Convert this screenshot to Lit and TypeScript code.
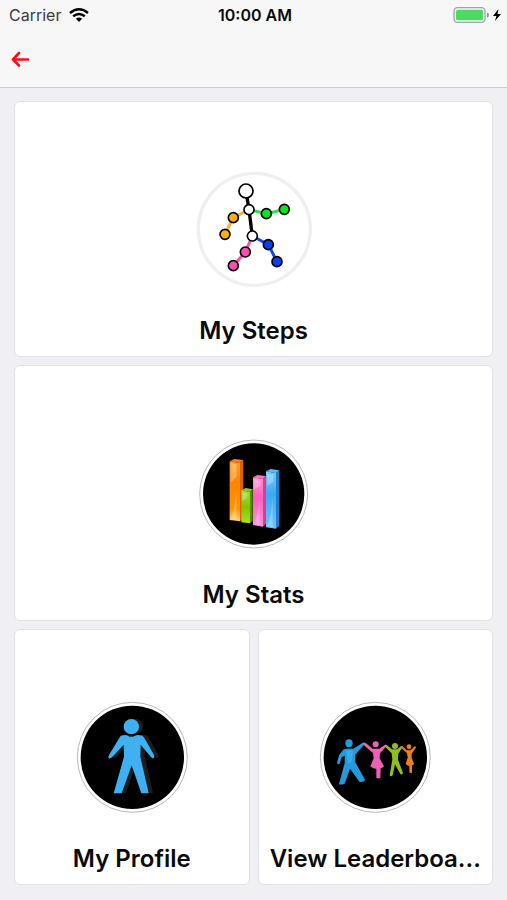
import { LitElement, html, svg, css, type TemplateResult } from "lit";
import { customElement, property } from "lit/decorators.js";

type Joint = [x: number, y: number, r: number, fill: string];

const joints: Joint[] = [
  [168, 77, 21, "#fff"],
  [177, 133, 15, "#fff"],
  [187, 212, 15, "#fff"],
  [130, 157, 15, "#fbb00f"],
  [105, 207, 15, "#fbb00f"],
  [229, 145, 15, "#0ae51e"],
  [283, 132, 15, "#0ae51e"],
  [166, 260, 15, "#fb4fae"],
  [130, 301, 15, "#fb4fae"],
  [235, 238, 15, "#0b40f0"],
  [261, 289, 15, "#0b40f0"],
];

const stepsIcon = html`
  <svg viewBox="-3 -1 390 390" aria-hidden="true">
    <circle cx="193" cy="192" r="168" fill="#fff" stroke="#efefef" stroke-width="10" />
    <g fill="none" stroke-width="9">
      <path d="M177 133L130 157L105 207" stroke="#fbb03c" />
      <path d="M177 133L229 145L283 132" stroke="#2fe04a" />
      <path d="M187 212L166 260L130 301" stroke="#fb4f9e" />
      <path d="M187 212L235 238L261 289" stroke="#1648f5" />
      <path d="M168 77L177 133L187 212" stroke="#000" stroke-width="10" />
    </g>
    ${joints.map(
      ([x, y, r, fill]) =>
        svg`<circle cx=${x} cy=${y} r=${r} fill=${fill} stroke="#000" stroke-width="5" />`
    )}
  </svg>
`;

const statsIcon = html`
  <svg viewBox="-3 -3 390 390" aria-hidden="true">
    <defs>
      <linearGradient id="o" x1="0" y1="0" x2="0" y2="1">
        <stop offset="0" stop-color="#ff9d2e" /><stop offset=".35" stop-color="#fb8500" />
        <stop offset=".8" stop-color="#ff9408" /><stop offset="1" stop-color="#ffd27a" />
      </linearGradient>
      <linearGradient id="g" x1="0" y1="0" x2="0" y2="1">
        <stop offset="0" stop-color="#a6dc3c" /><stop offset=".5" stop-color="#84c400" />
        <stop offset="1" stop-color="#a4e12a" />
      </linearGradient>
      <linearGradient id="p" x1="0" y1="0" x2="0" y2="1">
        <stop offset="0" stop-color="#ff93d4" /><stop offset=".4" stop-color="#fa5fbd" />
        <stop offset="1" stop-color="#ff8fd8" />
      </linearGradient>
      <linearGradient id="b" x1="0" y1="0" x2="0" y2="1">
        <stop offset="0" stop-color="#7dccff" /><stop offset=".4" stop-color="#39a9f5" />
        <stop offset="1" stop-color="#6cc6ff" />
      </linearGradient>
    </defs>
    <circle cx="191" cy="192" r="162" fill="#fff" stroke="#b9b9b9" stroke-width="3" />
    <circle cx="191" cy="192" r="152" />
    <path d="M119 94L133 87L160 90L150 99Z" fill="#ff7a1c" />
    <path d="M150 98L160 90V266L150 274Z" fill="#dc6400" />
    <path d="M119 94L150 99V274L119 270Z" fill="url(#o)" />
    <path d="M154 181L167 174L188 178L180 186Z" fill="#8fc92c" />
    <path d="M180 186L188 178V272L180 280Z" fill="#568c00" />
    <path d="M154 181L180 186V280L154 277Z" fill="url(#g)" />
    <path d="M189 142L202 135L228 138L219 147Z" fill="#ff6fc4" />
    <path d="M219 147L228 138V281L219 290Z" fill="#d83c97" />
    <path d="M189 142L219 147V290L189 285Z" fill="url(#p)" />
    <path d="M228 124L242 117L268 121L258 130Z" fill="#55b8fb" />
    <path d="M258 130L268 121V287L258 296Z" fill="#1d7fc8" />
    <path d="M228 124L258 130V296L228 292Z" fill="url(#b)" />
    <g fill="#fff" opacity=".28">
      <path d="M122 100L140 103V140L122 158Z" />
      <path d="M157 188L172 190V204L157 212Z" />
      <path d="M192 149L211 152V168L192 180Z" />
      <path d="M232 132L250 135V155L232 168Z" />
      <path d="M134 225L139 190V270L123 268Z" />
      <path d="M203 250L209 205V286L193 283Z" />
      <path d="M243 250L248 205V292L232 289Z" />
    </g>
  </svg>
`;

const person =
  "M153 122Q169 118 174 122Q185 129 196 122Q202 118 218 122Q223 125 228 136L253 180Q256 187 251 190Q247 191 242 184L213 149L212 185L237 295H215L186 211L156 295H132L163 185L162 149L130 184Q124 191 118 190Q115 188 118 180Z";

const profileIcon = html`
  <svg viewBox="-8 -6 390 390" aria-hidden="true">
    <circle cx="188" cy="187" r="165" fill="#fff" stroke="#b9b9b9" stroke-width="3" />
    <circle cx="188" cy="187" r="155" />
    <g fill="#1d1d1d" transform="translate(13 -1)">
      <circle cx="185" cy="95" r="22" />
      <path d=${person} />
    </g>
    <g fill="#3fb1f3">
      <circle cx="185" cy="95" r="23" />
      <path d=${person} />
    </g>
  </svg>
`;

const leaderboardIcon = html`
  <svg viewBox="0 -6 390 390" aria-hidden="true">
    <circle cx="196" cy="187" r="165" fill="#fff" stroke="#b9b9b9" stroke-width="3" />
    <circle cx="196" cy="187" r="155" />
    <g fill="#2499dc">
      <ellipse cx="117" cy="145" rx="11" ry="12" />
      <path d="M101 163Q117 159 130 161L158 143Q164 143 162 149L136 179V202L165 254Q164 261 149 261L120 221L104 266Q92 271 87 267L104 205V182L95 187L89 206Q82 210 81 203L87 181Z" />
    </g>
    <path d="M108 168Q121 164 129 168L125 200L115 208Z" fill="#54baf2" opacity=".5" />
    <g fill="#ee5fb5">
      <circle cx="197" cy="148" r="9" />
      <path d="M159 143Q163 141 168 145L188 161H208L225 149Q230 149 228 155L210 175L209 190L222 214Q218 220 212 219L211 249Q205 252 199 248V221Q189 222 181 214L191 190L189 174L160 149Z" />
    </g>
    <g fill="#8fbd22">
      <circle cx="255" cy="153" r="9" />
      <path d="M225 150Q229 147 233 152L246 163H262L273 153Q278 153 276 159L265 176L264 194L279 234Q277 241 271 237L255 208L248 241Q241 247 239 240L247 194L245 175L226 156Z" />
    </g>
    <g fill="#ed7e22">
      <circle cx="297" cy="155" r="7" />
      <path d="M273 154Q277 152 280 156L291 166H302L314 154Q319 153 317 159L305 176V188L312 206Q311 211 306 211V233Q302 236 298 232V212Q292 213 287 207L293 188L291 175L274 159Z" />
    </g>
  </svg>
`;

@customElement("menu-card")
export class MenuCard extends LitElement {
  @property() label = "";
  @property({ attribute: false }) icon?: TemplateResult;

  static styles = css`
    :host {
      display: block;
      min-width: 0;
    }
    .card {
      box-sizing: border-box;
      display: flex;
      flex-direction: column;
      align-items: center;
      gap: 20px;
      width: 100%;
      padding: 63px 8px 9px;
      border: 1px solid #e2e2e6;
      border-radius: 6px;
      background: #fff;
      color: #0a0a0a;
      font: 600 24px/32px Inter, "Liberation Sans", sans-serif;
      cursor: pointer;
    }
    .label {
      max-width: 100%;
      overflow: hidden;
      text-overflow: ellipsis;
      white-space: nowrap;
    }
    svg {
      display: block;
      width: 130px;
      height: 130px;
    }
  `;

  render() {
    return html`
      <button class="card" type="button">
        ${this.icon}
        <span class="label">${this.label}</span>
      </button>
    `;
  }
}

@customElement("app-root")
export class AppRoot extends LitElement {
  static styles = css`
    :host {
      display: flex;
      flex-direction: column;
      min-height: 100vh;
      background: #efeff4;
      color: #0a0a0a;
      font-family: Inter, "Liberation Sans", sans-serif;
    }
    header {
      background: #f7f7f8;
      border-bottom: 1px solid #cdcdd1;
    }
    .status {
      display: grid;
      grid-template-columns: 1fr auto 1fr;
      align-items: center;
      height: 30px;
      padding: 0 6px 0 9px;
      font-size: 16px;
      line-height: 20px;
    }
    .carrier,
    .power {
      display: flex;
      align-items: center;
      gap: 8px;
      color: #3c3c3e;
    }
    .power {
      justify-content: flex-end;
      gap: 4px;
    }
    .time {
      font-weight: 600;
    }
    .nav {
      display: flex;
      align-items: center;
      height: 57px;
      padding: 0 10px;
    }
    .back {
      display: flex;
      padding: 0;
      border: 0;
      background: none;
      cursor: pointer;
    }
    svg {
      display: block;
    }
    .cards {
      display: grid;
      grid-template-columns: repeat(2, minmax(0, 1fr));
      gap: 8px;
      padding: 13px 14px;
    }
    .wide {
      grid-column: 1 / -1;
    }
  `;

  render() {
    return html`
      <header>
        <div class="status">
          <div class="carrier">
            <span>Carrier</span>
            <svg width="20" height="14" viewBox="0 0 20 14" fill="none" stroke="#000" stroke-width="2.5" aria-hidden="true">
              <path d="M1 4.9Q10 -2.3 19 4.9" />
              <path d="M4.2 8.3Q10 3.6 15.8 8.3" />
              <path d="M10 14L6.9 10.8Q10 8.4 13.1 10.8Z" fill="#000" stroke="none" />
            </svg>
          </div>
          <span class="time">10:00 AM</span>
          <div class="power">
            <svg width="36" height="16" viewBox="0 0 36 16" aria-hidden="true">
              <rect x="1" y="0.7" width="31" height="14.6" rx="3.5" fill="#f7f7f8" stroke="#a3a3a3" stroke-width="1.3" />
              <rect x="3" y="2.8" width="27" height="10.4" rx="1.5" fill="#4cd964" />
              <path d="M34 5.5Q36 6 36 8T34 10.5Z" fill="#8e8e8e" />
            </svg>
            <svg width="8" height="12" viewBox="0 0 8 12" aria-hidden="true">
              <path d="M5.5 0L0 7H3.4L2 12L8 5H4.5Z" />
            </svg>
          </div>
        </div>
        <nav class="nav">
          <button class="back" type="button" aria-label="Back">
            <svg width="20" height="16" viewBox="0 0 20 16" fill="none" stroke="#fb1018" stroke-width="2.6" stroke-linecap="round" stroke-linejoin="round" aria-hidden="true">
              <path d="M9 2L3 8.5L9 14.5M3 8.5H18" />
            </svg>
          </button>
        </nav>
      </header>
      <main class="cards">
        <menu-card class="wide" label="My Steps" .icon=${stepsIcon}></menu-card>
        <menu-card class="wide" label="My Stats" .icon=${statsIcon}></menu-card>
        <menu-card label="My Profile" .icon=${profileIcon}></menu-card>
        <menu-card label="View Leaderboa..." .icon=${leaderboardIcon}></menu-card>
      </main>
    `;
  }
}
